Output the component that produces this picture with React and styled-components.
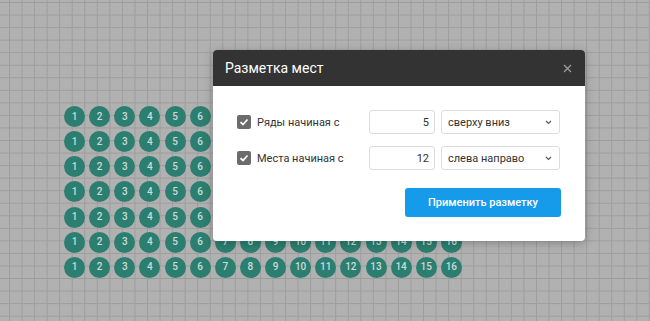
import React from "react";
import styled, { createGlobalStyle } from "styled-components";

const Global = createGlobalStyle`
  html, body { margin: 0; padding: 0; }
  body { font-family: Roboto, "Noto Sans", Arial, sans-serif; }
  * { box-sizing: border-box; }
`;

const Canvas = styled.div`
  position: relative;
  width: 650px;
  height: 321px;
  overflow: hidden;
  background-color: #b1b1b1;
  background-image:
    linear-gradient(to right, #9d9d9d 1px, transparent 1px),
    linear-gradient(to bottom, #9d9d9d 1px, transparent 1px);
  background-size: 12.55px 12.55px;
  background-position: 9px 2px;
  padding: 106px 0 0 64px;
`;

const SeatGrid = styled.div`
  display: grid;
  grid-template-columns: repeat(16, 21px);
  grid-auto-rows: 21px;
  column-gap: 4.13px;
  row-gap: 4.17px;
`;

const Seat = styled.div`
  width: 21px;
  height: 21px;
  border-radius: 50%;
  background: #2c7f70;
  color: #c9dcd7;
  font-size: 10px;
  font-weight: 500;
  display: flex;
  align-items: center;
  justify-content: center;
  line-height: 1;
`;

const Modal = styled.div`
  position: absolute;
  left: 213px;
  top: 50px;
  width: 372px;
  background: #fff;
  border-radius: 4px;
  box-shadow: 0 2px 10px rgba(0, 0, 0, 0.25);
  overflow: hidden;
`;

const Header = styled.div`
  height: 36px;
  background: #333333;
  display: flex;
  align-items: center;
  justify-content: space-between;
  padding: 0 12px 0 12px;
`;

const Title = styled.div`
  color: #fff;
  font-size: 14px;
  font-weight: 400;
`;

const Close = styled.div`
  width: 12px;
  height: 12px;
  display: flex;
  align-items: center;
  justify-content: center;
`;

const Body = styled.div`
  padding: 24px 24px 24px 24px;
  display: flex;
  flex-direction: column;
`;

const Row = styled.div`
  display: flex;
  align-items: center;
  height: 24px;
  margin-bottom: ${(p) => (p.$last ? "18px" : "12px")};
`;

const Label = styled.label`
  display: flex;
  align-items: center;
  width: 132px;
  font-size: 11px;
  color: #333;
`;

const Box = styled.span`
  width: 14px;
  height: 14px;
  border-radius: 2px;
  background: #6b6b6b;
  margin-right: 6px;
  display: flex;
  align-items: center;
  justify-content: center;
`;

const NumInput = styled.div`
  width: 66px;
  height: 24px;
  border: 1px solid #dcdcdc;
  border-radius: 3px;
  font-size: 11px;
  color: #333;
  display: flex;
  align-items: center;
  justify-content: flex-end;
  padding-right: 5px;
`;

const Select = styled.div`
  width: 119px;
  height: 24px;
  margin-left: 6px;
  border: 1px solid #dcdcdc;
  border-radius: 3px;
  font-size: 11px;
  color: #333;
  display: flex;
  align-items: center;
  justify-content: space-between;
  padding: 0 7px 0 6px;
`;

const Footer = styled.div`
  display: flex;
  justify-content: flex-end;
`;

const Button = styled.button`
  width: 156px;
  height: 29px;
  border: none;
  border-radius: 3px;
  background: #159bea;
  color: #fff;
  font-family: inherit;
  font-size: 11px;
  font-weight: 500;
`;

const Check = () => (
  <svg width="10" height="10" viewBox="0 0 10 10">
    <path d="M1.5 5.2 L4 7.5 L8.5 2.5" fill="none" stroke="#fff" strokeWidth="1.8" />
  </svg>
);

const Chevron = () => (
  <svg width="7" height="5" viewBox="0 0 7 5">
    <path d="M1 1 L3.5 3.5 L6 1" fill="none" stroke="#555" strokeWidth="1.1" />
  </svg>
);

const Cross = () => (
  <svg width="9" height="9" viewBox="0 0 9 9">
    <path d="M1 1 L8 8 M8 1 L1 8" fill="none" stroke="#9a9a9a" strokeWidth="1.4" />
  </svg>
);

export default function App() {
  const rows = Array.from({ length: 7 });
  const cols = Array.from({ length: 16 }, (_, i) => i + 1);
  return (
    <>
      <Global />
      <Canvas>
        <SeatGrid>
          {rows.map((_, r) =>
            cols.map((c) => <Seat key={`${r}-${c}`}>{c}</Seat>)
          )}
        </SeatGrid>
        <Modal>
          <Header>
            <Title>Разметка мест</Title>
            <Close><Cross /></Close>
          </Header>
          <Body>
            <Row>
              <Label>
                <Box><Check /></Box>
                Ряды начиная с
              </Label>
              <NumInput>5</NumInput>
              <Select>
                сверху вниз <Chevron />
              </Select>
            </Row>
            <Row $last>
              <Label>
                <Box><Check /></Box>
                Места начиная с
              </Label>
              <NumInput>12</NumInput>
              <Select>
                слева направо <Chevron />
              </Select>
            </Row>
            <Footer>
              <Button>Применить разметку</Button>
            </Footer>
          </Body>
        </Modal>
      </Canvas>
    </>
  );
}
